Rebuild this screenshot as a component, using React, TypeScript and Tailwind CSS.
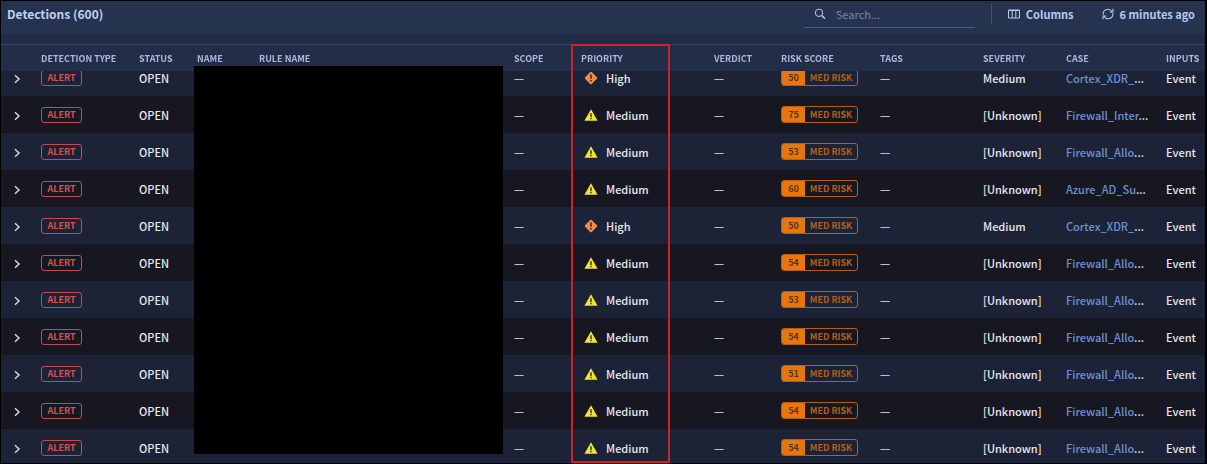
import { useLayoutEffect, useRef } from "react";

type Detection = {
  priority: "High" | "Medium";
  score: number;
  severity: string;
  caseName: string;
};

const detections: Detection[] = [
  { priority: "High", score: 50, severity: "Medium", caseName: "Cortex_XDR_" },
  { priority: "Medium", score: 75, severity: "[Unknown]", caseName: "Firewall_Inter" },
  { priority: "Medium", score: 53, severity: "[Unknown]", caseName: "Firewall_Allo" },
  { priority: "Medium", score: 60, severity: "[Unknown]", caseName: "Azure_AD_Su" },
  { priority: "High", score: 50, severity: "Medium", caseName: "Cortex_XDR_" },
  { priority: "Medium", score: 54, severity: "[Unknown]", caseName: "Firewall_Allo" },
  { priority: "Medium", score: 53, severity: "[Unknown]", caseName: "Firewall_Allo" },
  { priority: "Medium", score: 54, severity: "[Unknown]", caseName: "Firewall_Allo" },
  { priority: "Medium", score: 51, severity: "[Unknown]", caseName: "Firewall_Allo" },
  { priority: "Medium", score: 54, severity: "[Unknown]", caseName: "Firewall_Allo" },
  { priority: "Medium", score: 54, severity: "[Unknown]", caseName: "Firewall_Allo" },
];

const columns = [
  { label: "", width: "w-[40px]" },
  { label: "DETECTION TYPE", width: "w-[98px]" },
  { label: "STATUS", width: "w-[58px]" },
  { label: "NAME", width: "w-[62px]" },
  { label: "RULE NAME", width: "w-[255px]" },
  { label: "SCOPE", width: "w-[67px]" },
  { label: "PRIORITY", width: "w-[133px]" },
  { label: "VERDICT", width: "w-[67px]" },
  { label: "RISK SCORE", width: "w-[99px]" },
  { label: "TAGS", width: "w-[103px]" },
  { label: "SEVERITY", width: "w-[83px]" },
  { label: "CASE", width: "w-[100px]" },
  { label: "INPUTS", width: "" },
];

const PriorityIcon = ({ priority }: { priority: Detection["priority"] }) => {
  if (priority === "High") {
    return (
      <svg viewBox="0 0 14 14" className="size-3.5" aria-hidden="true">
        <path d="M6.2 1.1a1.1 1.1 0 0 1 1.6 0l5.1 5.1a1.1 1.1 0 0 1 0 1.6l-5.1 5.1a1.1 1.1 0 0 1-1.6 0L1.1 7.8a1.1 1.1 0 0 1 0-1.6z" fill="#f08b45" />
        <path d="M6.2 3.5h1.6v4.2H6.2zM6.2 8.9h1.6v1.5H6.2z" fill="#3a2a2c" />
      </svg>
    );
  }
  return (
    <svg viewBox="0 0 14 14" className="size-3.5" aria-hidden="true">
      <path d="M7 1.2 13.6 12.8H.4z" fill="#f2e33a" />
      <path d="M6.3 5.2h1.4v3.7H6.3zM6.3 9.8h1.4v1.4H6.3z" fill="#33311f" />
    </svg>
  );
};

const Dash = () => <span className="block font-['Open_Sans',sans-serif] text-[10px] font-normal text-[#b9bfd0]">—</span>;

const Toolbar = () => {
  return (
    <header className="flex h-[33px] shrink-0 items-start bg-[#26334f] pr-2.5 pl-1.5 text-[#b5c8ef]">
      <h1 className="pt-1 text-[12px] leading-[18px] font-bold text-[#c0d0f2]">Detections (600)</h1>
      <label className="ml-auto flex h-[27px] w-[171px] items-center gap-2.5 border-b border-[#48597f] pl-2.5">
        <svg viewBox="0 0 12 12" className="size-3 shrink-0" fill="none" stroke="#c3cde4" aria-hidden="true">
          <circle cx="5" cy="4.8" r="3.7" />
          <path d="m7.7 7.5 3.3 3.3" strokeWidth="1.5" />
        </svg>
        <input
          type="text"
          aria-label="Search"
          placeholder="Search..."
          className="w-full min-w-0 bg-transparent text-[11px] leading-4 text-white outline-none placeholder:text-[#7a879f]"
        />
      </label>
      <span className="mt-[3px] ml-4 h-5 w-px bg-[#3d4f76]" />
      <button className="ml-4 flex items-center gap-1.5 pt-1 text-[11px] leading-[18px] font-bold">
        <svg viewBox="0 0 12 10" className="h-2.5 w-3" fill="none" stroke="currentColor" aria-hidden="true">
          <path d="M.5 1.5h11v7.5H.5zM4.2 1.5v7.5M7.8 1.5v7.5M.5 1h11" />
        </svg>
        Columns
      </button>
      <button className="ml-7 flex items-center gap-1.5 pt-1 text-[11px] leading-[18px] font-bold">
        <svg viewBox="0 0 12 12" className="size-3" fill="none" stroke="currentColor" strokeWidth="1.1" aria-hidden="true">
          <path d="M1.2 6.8V6A4.6 4.6 0 0 1 9.9 3.8M10.8 5.2V6A4.6 4.6 0 0 1 2.1 8.2" />
          <path d="M11 .8v3.200H7.800M1 11.200V8h3.200" />
        </svg>
        6 minutes ago
      </button>
    </header>
  );
};

const DetectionRow = ({ item }: { item: Detection }) => {
  return (
    <tr className="h-[37px] odd:bg-[#1c2336] even:bg-[#171722]">
      <td className="pl-3">
        <button aria-label="Expand row" className="block pt-0.5">
          <svg viewBox="0 0 8 10" className="h-2.5 w-2" fill="none" stroke="#d5d9e4" strokeWidth="1.5" aria-hidden="true">
            <path d="m2 1.2 4 3.8-4 3.8" />
          </svg>
        </button>
      </td>
      <td>
        <span className="flex h-4 w-[41px] items-center justify-center rounded-[3px] border border-[#c34b50] text-[9px] font-bold text-[#d4524f]">
          ALERT
        </span>
      </td>
      <td>OPEN</td>
      <td></td>
      <td></td>
      <td><Dash /></td>
      <td>
        <span className="flex items-center gap-2 pl-[3px]">
          <PriorityIcon priority={item.priority} />
          {item.priority}
        </span>
      </td>
      <td><Dash /></td>
      <td>
        <span className="flex h-[17px] w-[77px] overflow-hidden rounded-[3px] border border-[#b35f17] text-[9px] leading-[15px] font-bold">
          <span className="w-[23px] bg-[#e8760f] text-center text-[#58351b]">{item.score}</span>
          <span className="flex-1 text-center text-[#b35f17]">MED RISK</span>
        </span>
      </td>
      <td><Dash /></td>
      <td>{item.severity}</td>
      <td>
        <a href="#" className="text-[#6c91d6]">{item.caseName}</a>
        ...
      </td>
      <td>Event</td>
    </tr>
  );
};

const App = () => {
  const listRef = useRef<HTMLDivElement>(null);

  // the list opens slightly scrolled under the sticky header
  useLayoutEffect(() => {
    if (listRef.current) listRef.current.scrollTop = 12;
  }, []);

  return (
    <main className="relative flex h-screen flex-col border border-r-2 border-black bg-[#212c46] font-['Noto_Sans_CJK_SC',sans-serif]">
      <Toolbar />
      <div ref={listRef} className="mt-2.5 min-h-0 flex-1 overflow-auto border-t border-[#35446b] [scrollbar-width:none]">
        <table className="w-full table-fixed text-left text-[11px] leading-4 font-medium whitespace-nowrap text-[#e6e8ef]">
          <thead className="sticky top-0 z-10 bg-[#222e48]">
            <tr className="h-[26px]">
              {columns.map((col, i) => (
                <th key={i} className={`${col.width} pt-0.5 text-[9px] font-bold text-[#a9b8dc]`}>
                  {col.label}
                </th>
              ))}
            </tr>
          </thead>
          <tbody>
            {detections.map((item, i) => (
              <DetectionRow key={i} item={item} />
            ))}
          </tbody>
        </table>
      </div>
      {/* redacted names */}
      <div className="absolute top-[65px] bottom-[9px] left-[193px] z-20 w-[309px] bg-black" />
      {/* priority highlight */}
      <div className="absolute top-[43px] bottom-0 left-[570px] z-20 w-[99px] border-2 border-[#cc2229]" />
    </main>
  );
};

export default App;
